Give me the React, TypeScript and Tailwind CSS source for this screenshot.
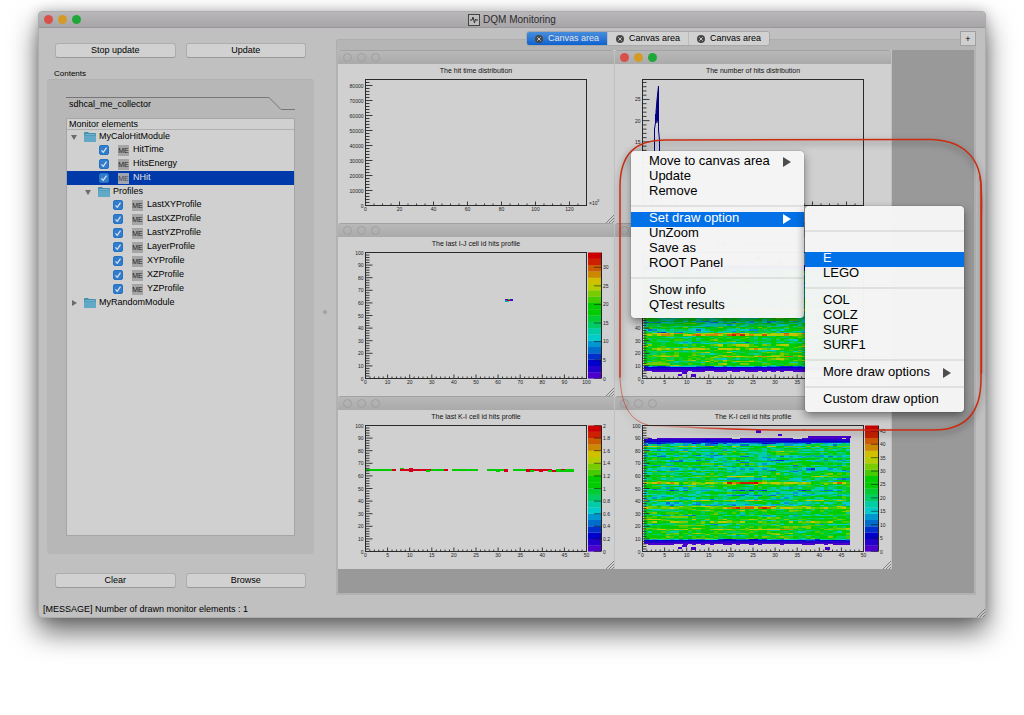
import React from "react";

const PALETTE = [
  "#4d00cc", "#2400cc", "#0000cc", "#0030cc", "#006ccc", "#0096d0", "#00cccc", "#00cca6", "#00cc66", "#00cc33",
  "#00cc00", "#00cc00", "#44cc00", "#78cc00", "#b4cc00", "#d0c000", "#cc8800", "#cc5c00", "#cc2000", "#cc0000",
];

const PLOT = { left: 27.5, top: 15.5, width: 221, height: 126 };
const BOTTOM = PLOT.top + PLOT.height;

type AxisSpec = { max: number; step: number; minor: number };

const range = (n: number) => Array.from({ length: n }, (_, i) => i);

function makeRandom(seed: number) {
  let s = seed;
  return () => {
    s = (s * 1664525 + 1013904223) % 4294967296;
    return s / 4294967296;
  };
}

function rowLevel(row: number): number {
  const lines: Record<number, number> = {
    5: 0, 6: 0, 7: 1, 8: 2, 9: 5, 13: 11, 17: 12.5, 18: 11, 21: 7.5, 23: 12, 25: 11.5, 28: 7.5, 32: 10, 34: 13.5, 35: 12.5,
    38: 7.5, 40: 11.5, 48: 6.5, 53: 11.5, 54: 13.5, 57: 7.5, 59: 11.5, 63: 8.5, 65: 7, 67: 10.5, 75: 6.5, 79: 10.5,
    83: 12, 85: 5, 86: 3, 87: 2, 88: 1, 89: 0,
  };
  if (row in lines) return lines[row];
  if (row < 36) return 9.3 + ((row * 7) % 3) * 0.7;
  if (row < 52) return 6.8 + ((row * 5) % 4) * 0.8;
  if (row < 62) return 9.2;
  return 6.6 + ((row * 7) % 4) * 0.8;
}

function heatPaths(seed: number) {
  const rnd = makeRandom(seed);
  const cw = (PLOT.width - 1) / 50;
  const ch = PLOT.height / 100;
  const paths: string[] = PALETTE.map(() => "");
  for (let row = 5; row < 90; row++) {
    const base = rowLevel(row);
    let prev = 0;
    for (let col = 0; col < 47; col++) {
      if (row === 5 && rnd() < 0.45) continue;
      if (row === 89 && rnd() < 0.12) continue;
      const edge = row < 9 || row > 85;
      prev = prev * 0.5 + (rnd() - 0.5) * (edge ? 0.7 : 5);
      const lift = base > 12 && col > 18 && col < 34 ? 1.4 : 0;
      const level = Math.max(0, Math.min(19, Math.round(base + prev + lift)));
      const x = (PLOT.left + 1 + col * cw).toFixed(2);
      const y = (BOTTOM - (row + 1) * ch).toFixed(2);
      paths[level] += `M${x} ${y}h${(cw + 0.05).toFixed(2)}v${(ch + 0.05).toFixed(2)}h-${(cw + 0.05).toFixed(2)}z`;
    }
  }
  return paths;
}

function Heatmap({ seed }: { seed: number }) {
  return (
    <g shapeRendering="crispEdges">
      {heatPaths(seed).map((d, i) => (d ? <path key={i} d={d} fill={PALETTE[i]} /> : null))}
      <g fill={PALETTE[0]}>
        <rect x="63" y="137" width="4" height="2" />
        <rect x="67" y="135" width="5" height="2" />
        <rect x="76" y="137" width="5" height="3" />
        <rect x="210" y="137" width="5" height="3" />
        <rect x="141" y="20" width="5" height="3" />
        <rect x="163" y="24" width="4" height="2" />
        <rect x="193" y="26" width="43" height="2" />
      </g>
    </g>
  );
}

function ticks({ max, step, minor }: AxisSpec) {
  const unit = step / minor;
  return range(Math.floor(max / unit + 0.001) + 1).map((i) => ({ value: i * unit, major: i % minor === 0 }));
}

const label = (v: number) => String(Math.round(v * 10) / 10);

function Axes({ x, y, z }: { x: AxisSpec; y: AxisSpec; z?: AxisSpec }) {
  return (
    <g fontSize="5" fill="#222">
      {z && (
        <g>
          {PALETTE.map((c, i) => (
            <rect key={i} x="250" y={BOTTOM - (i + 1) * 6.3} width="13" height="6.4" fill={c} />
          ))}
          <path d={`M263.5 ${PLOT.top}V${BOTTOM}`} stroke="#222" />
          {ticks(z).map((t) => {
            const py = BOTTOM - (t.value / z.max) * PLOT.height;
            return (
              <g key={t.value}>
                <path d={`M256 ${py}H263`} stroke="#111" strokeOpacity="0.7" strokeWidth="0.8" />
                <text x="265" y={py + 2}>{label(t.value)}</text>
              </g>
            );
          })}
        </g>
      )}
      <rect x={PLOT.left} y={PLOT.top} width={PLOT.width} height={PLOT.height} fill="none" stroke="#2a2a2a" />
      {ticks(x).map((t) => {
        const px = PLOT.left + (t.value / x.max) * PLOT.width;
        return (
          <g key={t.value}>
            <path d={`M${px} ${BOTTOM}v${t.major ? -4 : -2}`} stroke="#2a2a2a" strokeWidth="0.9" />
            {t.major && <text x={px} y={BOTTOM + 5} textAnchor="middle">{label(t.value)}</text>}
          </g>
        );
      })}
      {ticks(y).map((t) => {
        const py = BOTTOM - (t.value / y.max) * PLOT.height;
        return (
          <g key={t.value}>
            <path d={`M${PLOT.left} ${py}h${t.major ? 7 : 4}`} stroke="#2a2a2a" strokeWidth="0.9" />
            {t.major && <text x={PLOT.left - 2} y={py + 2} textAnchor="end">{label(t.value)}</text>}
          </g>
        );
      })}
    </g>
  );
}

const PERCENT: AxisSpec = { max: 100, step: 10, minor: 5 };
const FIFTY: AxisSpec = { max: 50, step: 5, minor: 5 };

function segments(list: [number, number, number, number, string][]) {
  return list.map(([x, y, w, h, c], i) => <rect key={i} x={x} y={y} width={w} height={h} fill={c} shapeRendering="crispEdges" />);
}

const G = "#00cc00";
const R = "#d00018";

const CHARTS: { title: string; active?: boolean; x: AxisSpec; y: AxisSpec; z?: AxisSpec; data: React.ReactNode }[] = [
  {
    title: "The hit time distribution",
    x: { max: 130, step: 20, minor: 4 },
    y: { max: 84000, step: 10000, minor: 5 },
    data: (
      <g fill="#222" fontSize="5">
        <text x="251" y="141">×10</text>
        <text x="259" y="138" fontSize="4">3</text>
      </g>
    ),
  },
  {
    title: "The number of hits distribution",
    active: true,
    x: { max: 130, step: 20, minor: 4 },
    y: { max: 29.7, step: 5, minor: 5 },
    data: (
      <g stroke="#000080" fill="#000080">
        <path d="M41 59V48L42 36L43.500 22V60L42.500 56V44Z" strokeWidth="1" />
        <path d="M38 141L39.500 87V65L40.500 59V50M43.500 50V66L44.500 76V90L47 141" fill="none" />
      </g>
    ),
  },
  {
    title: "The last I-J cell id hits profile",
    x: PERCENT,
    y: PERCENT,
    z: { max: 34, step: 5, minor: 1 },
    data: segments([
      [167, 62, 3, 1, "#4d00cc"], [170, 62, 2, 1, G], [172, 62, 3, 2, "#4d00cc"],
      [167, 63, 2, 2, "#0096d0"], [169, 63, 3, 1, R], [169, 64, 2, 1, "#00cccc"],
    ]),
  },
  { title: "The K-I cell id hits profile", x: FIFTY, y: PERCENT, data: <Heatmap seed={77} /> },
  {
    title: "The last K-I cell id hits profile",
    x: FIFTY,
    y: PERCENT,
    z: { max: 2, step: 0.2, minor: 1 },
    data: segments([
      [28, 59, 26, 2, G], [54, 59, 4, 2, R], [62, 58, 4, 1, G], [62, 59, 31, 2, R], [71, 58, 4, 4, R],
      [88, 60, 4, 2, G], [93, 59, 13, 2, G], [106, 59, 4, 2, R], [114, 59, 26, 2, G], [149, 59, 17, 2, G],
      [158, 60, 4, 2, G], [166, 59, 4, 3, R], [175, 59, 13, 2, G], [188, 59, 26, 2, R], [188, 60, 4, 2, R],
      [192, 60, 4, 2, G], [201, 60, 4, 2, R], [210, 60, 4, 2, G], [214, 60, 4, 2, R], [218, 59, 18, 3, G], [223, 59, 4, 1, R],
    ]),
  },
  { title: "The K-I cell id hits profile", x: FIFTY, y: PERCENT, z: { max: 47, step: 5, minor: 1 }, data: <Heatmap seed={2024} /> },
];

function Grip() {
  return (
    <svg width="9" height="9" viewBox="0 0 9 9" className="absolute right-0 bottom-0" aria-hidden="true">
      <path d="M1 9L9 1M4 9L9 4M7 9L9 7" stroke="#7f7f7f" />
    </svg>
  );
}

function Lights({ on, small }: { on: boolean; small?: boolean }) {
  const colors = on
    ? ["bg-[#d9504a]", "bg-[#d39b25]", "bg-[#1fa83a]"]
    : ["border border-[#9f9f9f]", "border border-[#9f9f9f]", "border border-[#9f9f9f]"];
  return (
    <div className="flex gap-[5px] pl-[5px]">
      {colors.map((c, i) => (
        <span key={i} className={`size-[9px] rounded-full ${c}`} />
      ))}
    </div>
  );
}

function PlotWindow({ chart }: { chart: (typeof CHARTS)[number] }) {
  return (
    <section className="relative bg-[#d0d0d0] border-r border-[#c0c0c0]">
      <div className="flex h-[14px] items-center rounded-t-[3px] border-t border-[#a2a2a2] bg-linear-to-b from-[#b8b8b8] to-[#aaaaaa]">
        <Lights on={!!chart.active} />
      </div>
      <svg width="276" height="159" viewBox="0 0 276 159" fontFamily="'Liberation Sans', Arial, sans-serif" className="block">
        <text x="138" y="8.500" textAnchor="middle" fontSize="7" fill="#111">{chart.title}</text>
        {chart.data}
        <Axes x={chart.x} y={chart.y} z={chart.z} />
      </svg>
      <Grip />
    </section>
  );
}

function PushButton({ children }: { children: React.ReactNode }) {
  return (
    <button className="h-[15px] flex-1 rounded-[3px] border border-[#adadad] border-b-[#999] bg-[#d1d1d1] text-center leading-[11px]">
      {children}
    </button>
  );
}

function Folder() {
  return (
    <svg width="12" height="10" viewBox="0 0 12 10" className="shrink-0" aria-hidden="true">
      <path d="M0 1Q0 0 1 0H4L5 1H11Q12 1 12 2V9Q12 10 11 10H1Q0 10 0 9Z" fill="#438fae" />
      <path d="M0 3.500H12V9Q12 10 11 10H1Q0 10 0 9Z" fill="#61a9c7" />
      <path d="M1 2.500H11" stroke="#8fc3d8" strokeWidth="0.7" />
    </svg>
  );
}

function Branch({ name, open, indent }: { name: string; open: boolean; indent: string }) {
  return (
    <div className={`flex h-[13px] items-center ${indent}`}>
      <svg width="6" height="6" viewBox="0 0 6 6" className="mr-[7px] shrink-0" aria-hidden="true">
        <path d={open ? "M0 1H6L3 6Z" : "M1 0V6L6 3Z"} fill="#6b6b6b" />
      </svg>
      <Folder />
      <span className="ml-[3px]">{name}</span>
    </div>
  );
}

function Leaf({ name, selected, indent }: { name: string; selected?: boolean; indent: string }) {
  return (
    <li>
      <label className={`flex h-[14px] items-center ${indent} ${selected ? "bg-[#0039a9] text-[#e2e2e2]" : ""}`}>
        <span className="grid shrink-0">
          <input type="checkbox" defaultChecked className="peer col-start-1 row-start-1 size-[10px] appearance-none rounded-[2px] border border-[#2872bd] bg-[#c9c9c9] checked:bg-[#2f7dd0]" />
          <svg viewBox="0 0 10 10" className="pointer-events-none col-start-1 row-start-1 size-[10px] opacity-0 peer-checked:opacity-100" aria-hidden="true">
            <path d="M2.500 5.300L4.300 7.300L7.500 2.700" fill="none" stroke="#e4e4e4" strokeWidth="1.200" />
          </svg>
        </span>
        <span className={`mr-[4px] ml-[9px] h-[11px] w-[11px] text-center text-[7px] leading-[12px] ${selected ? "bg-[#a0a5b2] text-[#444]" : "bg-[#a5a5a5] text-[#222]"}`}>
          ME
        </span>
        {name}
      </label>
    </li>
  );
}

function Sidebar() {
  return (
    <aside className="flex w-[267px] shrink-0 flex-col">
      <div className="mt-[15px] mr-[8px] ml-[8px] flex gap-[10px]">
        <PushButton>Stop update</PushButton>
        <PushButton>Update</PushButton>
      </div>
      <h2 className="mt-[11px] ml-[7px] text-[8px] leading-[10px]">Contents</h2>
      <div className="flex flex-1 flex-col rounded-[3px] border-t border-[#b0b0b0] bg-[#b7b7b7] px-[19px] pt-[17px] pb-[18px]">
        <div className="flex h-[14px]">
          <h3 className="flex-1 border-t border-[#777] pl-[3px] leading-[12px]">sdhcal_me_collector</h3>
          <svg width="26" height="14" viewBox="0 0 26 14" aria-hidden="true">
            <path d="M0 0.500L12 12.500H26" fill="none" stroke="#777" />
          </svg>
        </div>
        <div className="mt-[7px] flex-1 border border-[#a5a5a5] bg-[#d0d0d0]">
          <div className="h-[11px] border-b border-[#b0b0b0] pl-[2px] leading-[10px]">Monitor elements</div>
          <ul>
            <li>
              <Branch name="MyCaloHitModule" open indent="pl-[4px]" />
              <ul>
                <Leaf name="HitTime" indent="pl-[32px]" />
                <Leaf name="HitsEnergy" indent="pl-[32px]" />
                <Leaf name="NHit" indent="pl-[32px]" selected />
                <li>
                  <Branch name="Profiles" open indent="pl-[18px]" />
                  <ul>
                    {["LastXYProfile", "LastXZProfile", "LastYZProfile", "LayerProfile", "XYProfile", "XZProfile", "YZProfile"].map((n) => (
                      <Leaf key={n} name={n} indent="pl-[46px]" />
                    ))}
                  </ul>
                </li>
              </ul>
            </li>
            <li>
              <Branch name="MyRandomModule" open={false} indent="pl-[4px]" />
            </li>
          </ul>
        </div>
      </div>
      <div className="mt-[19px] mr-[8px] mb-[7px] ml-[8px] flex gap-[10px]">
        <PushButton>Clear</PushButton>
        <PushButton>Browse</PushButton>
      </div>
    </aside>
  );
}

function CanvasTab({ active }: { active?: boolean }) {
  return (
    <button
      className={`flex items-center gap-[5px] px-[8px] leading-[13px] ${
        active ? "bg-linear-to-b from-[#468ddb] to-[#0a62d0] text-[#e4e4e4]" : "border-l border-[#bcbcbc] bg-[#d1d1d1]"
      }`}
    >
      <svg width="8" height="8" viewBox="0 0 8 8" aria-hidden="true">
        <circle cx="4" cy="4" r="4" fill="#474747" />
        <path d="M2.300 2.300L5.700 5.700M5.700 2.300L2.300 5.700" stroke="#c8c8c8" />
      </svg>
      Canvas area
    </button>
  );
}

type MenuEntry = { text: string; sub?: boolean; active?: boolean } | "separator";

function Menu({ entries, className }: { entries: MenuEntry[]; className: string }) {
  return (
    <div role="menu" className={`absolute rounded-[4px] bg-[#f5f5f5]/98 py-[4px] text-[13px] text-black shadow-[0_4px_10px_rgba(0,0,0,0.45),0_0_1px_rgba(0,0,0,0.6)] ${className}`}>
      {entries.map((e, i) =>
        e === "separator" ? (
          <div key={i} role="separator" className="py-[5px]">
            <div className="h-[2px] bg-[#e0e0e0]" />
          </div>
        ) : (
          <button
            key={i}
            role="menuitem"
            className={`flex h-[15px] w-full items-start justify-between pr-[13px] pl-[18px] text-left leading-[12px] ${e.active ? "bg-[#0270e6] text-white" : ""}`}
          >
            <span>{e.text}</span>
            {e.sub && (
              <svg width="8" height="10" viewBox="0 0 8 10" className="mt-[2px]" aria-hidden="true">
                <path d="M0 0V10L8 5Z" fill={e.active ? "#ffffff" : "#4d4d4d"} />
              </svg>
            )}
          </button>
        )
      )}
    </div>
  );
}

const MAIN_MENU: MenuEntry[] = [
  { text: "Move to canvas area", sub: true }, { text: "Update" }, { text: "Remove" }, "separator",
  { text: "Set draw option", sub: true, active: true }, { text: "UnZoom" }, { text: "Save as" }, { text: "ROOT Panel" }, "separator",
  { text: "Show info" }, { text: "QTest results" },
];

const DRAW_MENU: MenuEntry[] = [
  { text: "" }, "separator", { text: "" }, { text: "E", active: true }, { text: "LEGO" }, "separator",
  { text: "COL" }, { text: "COLZ" }, { text: "SURF" }, { text: "SURF1" }, "separator",
  { text: "More draw options", sub: true }, "separator", { text: "Custom draw option" },
];

function Highlight() {
  return (
    <svg width="374" height="304" viewBox="0 0 374 304" className="pointer-events-none absolute top-[121px] left-[575px] overflow-visible" aria-hidden="true">
      <defs>
        <linearGradient id="fade" gradientUnits="userSpaceOnUse" x1="10" y1="294" x2="120" y2="294">
          <stop offset="0" stopColor="#cc2b10" stopOpacity="0.5" />
          <stop offset="0.300" stopColor="#cc2b10" stopOpacity="0.15" />
          <stop offset="1" stopColor="#cc2b10" />
        </linearGradient>
      </defs>
      <g fill="none" stroke="#cc2b10" strokeLinecap="round" className="drop-shadow-[0_3px_3px_rgba(0,0,0,0.5)]">
        <path d="M6 244V54C6 22 20 7 52 7L316 6.500C348 7 366 24 367 52V246C367 282 350 297 320 297H190" strokeWidth="1.500" />
        <path d="M366 44C368.500 60 367.500 70 367.500 90V240" strokeWidth="1.500" />
        <path d="M190 297C140 298 80 294 39 293" stroke="url(#fade)" strokeWidth="1.500" />
        <path d="M6 244C7 272 16 288 34 292" strokeWidth="0.800" strokeOpacity="0.700" />
      </g>
    </svg>
  );
}

export default function App() {
  return (
    <div className="overflow-hidden bg-white px-[38px] pt-[11px] pb-[98px] font-['Liberation_Sans',Arial,sans-serif] text-black">
      <div className="relative rounded-[4px] border border-[#adadad] bg-[#c0c0c0] text-[9px] shadow-[0_14px_28px_rgba(0,0,0,0.6),0_0_12px_rgba(0,0,0,0.2)]">
        <header className="grid h-[16px] grid-cols-[1fr_auto_1fr] items-center rounded-t-[3px] border-b border-[#9b989b] bg-linear-to-b from-[#bab7ba] to-[#a8a5a8]">
          <Lights on />
          <h1 className="flex items-center gap-[3px] text-[10px] text-[#2c2c2c]">
            <svg width="12" height="12" viewBox="0 0 12 12" aria-hidden="true">
              <rect x="0.500" y="0.500" width="11" height="11" fill="#bdbdbd" stroke="#444" />
              <path d="M2 6H4L5 3L6.500 9L7.500 5L8 6H10" fill="none" stroke="#333" />
            </svg>
            DQM Monitoring
          </h1>
        </header>
        <div className="flex pr-[9px] pl-[8px]">
          <Sidebar />
          <div className="flex w-[22px] shrink-0 items-center justify-center">
            <span className="size-[4px] rounded-full border border-[#999] bg-[#b0b0b0]" />
          </div>
          <main className="min-w-0 flex-1 pt-[3px]">
            <div className="grid grid-cols-[1fr_auto_1fr_16px] items-start">
              <div className="mt-[8px] h-[11px] rounded-tl-[3px] border-t border-l border-[#adadad] bg-[#b5b5b5]" />
              <div className="flex h-[19px] flex-col bg-linear-to-b from-[#c0c0c0] from-50% to-[#b5b5b5] to-50%">
                <div className="flex h-[15px] overflow-hidden rounded-[3px] border border-[#a8a8a8]">
                  <CanvasTab active />
                  <CanvasTab />
                  <CanvasTab />
                </div>
              </div>
              <div className="mt-[8px] h-[11px] border-t border-[#adadad] bg-[#b5b5b5]" />
              <div className="flex h-[19px] flex-col bg-[#b5b5b5]">
                <button aria-label="Add canvas area" className="h-[15px] w-full border border-[#a0a0a0] bg-[#cfcfcf] leading-[12px]">
                  +
                </button>
              </div>
            </div>
            <div className="border-x-2 border-b-2 border-[#b2b2b2] bg-[#999999] pb-[24px]">
              <div className="grid grid-cols-[277px_277px]">
                {CHARTS.map((c, i) => (
                  <PlotWindow key={i} chart={c} />
                ))}
              </div>
            </div>
          </main>
        </div>
        <footer className="pt-[8px] pb-[2px] pl-[4px] leading-[12px]">[MESSAGE] Number of drawn monitor elements : 1</footer>
        <Grip />
        <Highlight />
        <Menu entries={MAIN_MENU} className="top-[139px] left-[592px] w-[173px]" />
        <Menu entries={DRAW_MENU} className="top-[194px] left-[766px] w-[159px]" />
      </div>
    </div>
  );
}
